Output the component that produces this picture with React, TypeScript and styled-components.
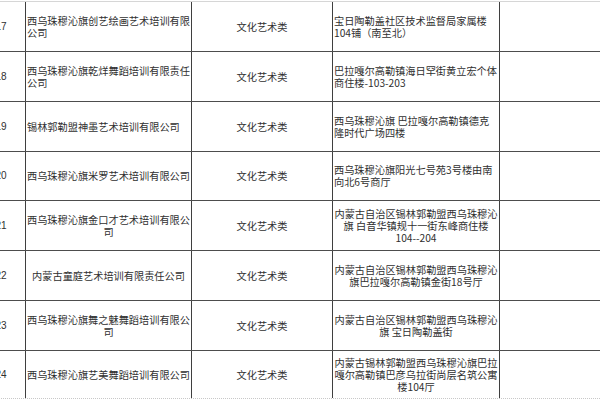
import React from "react";
import styled, { createGlobalStyle } from "styled-components";

const GlobalStyle = createGlobalStyle`
  html, body {
    margin: 0;
    padding: 0;
    background: #ffffff;
    overflow: hidden;
  }
  body {
    font-family: "Noto Sans CJK SC", "Noto Sans", "Liberation Sans", sans-serif;
    color: #303030;
  }
`;

const Sheet = styled.div`
  margin-top: 1px;
  margin-left: -24px;
  width: 720px;
  border-top: 1px solid #d6d6d6;
`;

const Row = styled.div<{ $h: number; $last?: boolean }>`
  display: grid;
  grid-template-columns: 50px 166px 141px 167px 1fr;
  height: ${(p) => p.$h}px;
  box-sizing: border-box;
  border-bottom: ${(p) => (p.$last ? "1px dotted #c8c8c8" : "1px solid #4d4d4d")};
`;

const Cell = styled.div<{ $align?: "left" | "center" }>`
  box-sizing: border-box;
  border-right: 1px solid #3f3f3f;
  display: flex;
  align-items: center;
  justify-content: ${(p) => (p.$align === "left" ? "flex-start" : "center")};
  text-align: ${(p) => (p.$align === "left" ? "left" : "center")};
  padding: 0 1px;
  font-size: 10.2px;
  line-height: 12px;
  white-space: nowrap;
  overflow: hidden;
`;

const Num = styled(Cell)`
  font-family: "Liberation Sans", "Noto Sans", sans-serif;
  font-size: 10px;
  padding-right: 0;
`;

const Blank = styled.div``;

type Rec = {
  n: string;
  name: string[];
  nameAlign: "left" | "center";
  addr: string[];
  addrAlign: "left" | "center";
  h: number;
};

const rows: Rec[] = [
  {
    n: "17",
    name: ["西乌珠穆沁旗创艺绘画艺术培训有限", "公司"],
    nameAlign: "left",
    addr: ["宝日陶勒盖社区技术监督局家属楼", "104铺（南至北）"],
    addrAlign: "left",
    h: 50,
  },
  {
    n: "18",
    name: ["西乌珠穆沁旗乾烊舞蹈培训有限责任", "公司"],
    nameAlign: "left",
    addr: ["巴拉嘎尔高勒镇海日罕街黄立宏个体", "商住楼-103-203"],
    addrAlign: "left",
    h: 50,
  },
  {
    n: "19",
    name: ["锡林郭勒盟神墨艺术培训有限公司"],
    nameAlign: "left",
    addr: ["西乌珠穆沁旗 巴拉嘎尔高勒镇德克", "隆时代广场四楼"],
    addrAlign: "left",
    h: 50,
  },
  {
    n: "20",
    name: ["西乌珠穆沁旗米罗艺术培训有限公司"],
    nameAlign: "left",
    addr: ["西乌珠穆沁旗阳光七号苑3号楼由南", "向北6号商厅"],
    addrAlign: "left",
    h: 49,
  },
  {
    n: "21",
    name: ["西乌珠穆沁旗金口才艺术培训有限公", "司"],
    nameAlign: "center",
    addr: ["内蒙古自治区锡林郭勒盟西乌珠穆沁", "旗 白音华镇规十一街东峰商住楼", "104--204"],
    addrAlign: "center",
    h: 50,
  },
  {
    n: "22",
    name: ["内蒙古童庭艺术培训有限责任公司"],
    nameAlign: "center",
    addr: ["内蒙古自治区锡林郭勒盟西乌珠穆沁", "旗巴拉嘎尔高勒镇金街18号厅"],
    addrAlign: "center",
    h: 50,
  },
  {
    n: "23",
    name: ["西乌珠穆沁旗舞之魅舞蹈培训有限公", "司"],
    nameAlign: "center",
    addr: ["内蒙古自治区锡林郭勒盟西乌珠穆沁", "旗 宝日陶勒盖街"],
    addrAlign: "center",
    h: 50,
  },
  {
    n: "24",
    name: ["西乌珠穆沁旗艺美舞蹈培训有限公司"],
    nameAlign: "center",
    addr: ["内蒙古锡林郭勒盟西乌珠穆沁旗巴拉", "嘎尔高勒镇巴彦乌拉街尚层名筑公寓", "楼104厅"],
    addrAlign: "center",
    h: 48,
  },
];

const Lines: React.FC<{ lines: string[] }> = ({ lines }) => (
  <div>
    {lines.map((l, i) => (
      <React.Fragment key={i}>
        {i > 0 && <br />}
        {l}
      </React.Fragment>
    ))}
  </div>
);

export default function App() {
  return (
    <>
      <GlobalStyle />
      <Sheet>
        {rows.map((r, i) => (
          <Row key={r.n} $h={r.h} $last={i === rows.length - 1}>
            <Num>{r.n}</Num>
            <Cell $align={r.nameAlign}>
              <Lines lines={r.name} />
            </Cell>
            <Cell>文化艺术类</Cell>
            <Cell $align={r.addrAlign}>
              <Lines lines={r.addr} />
            </Cell>
            <Blank />
          </Row>
        ))}
      </Sheet>
    </>
  );
}
